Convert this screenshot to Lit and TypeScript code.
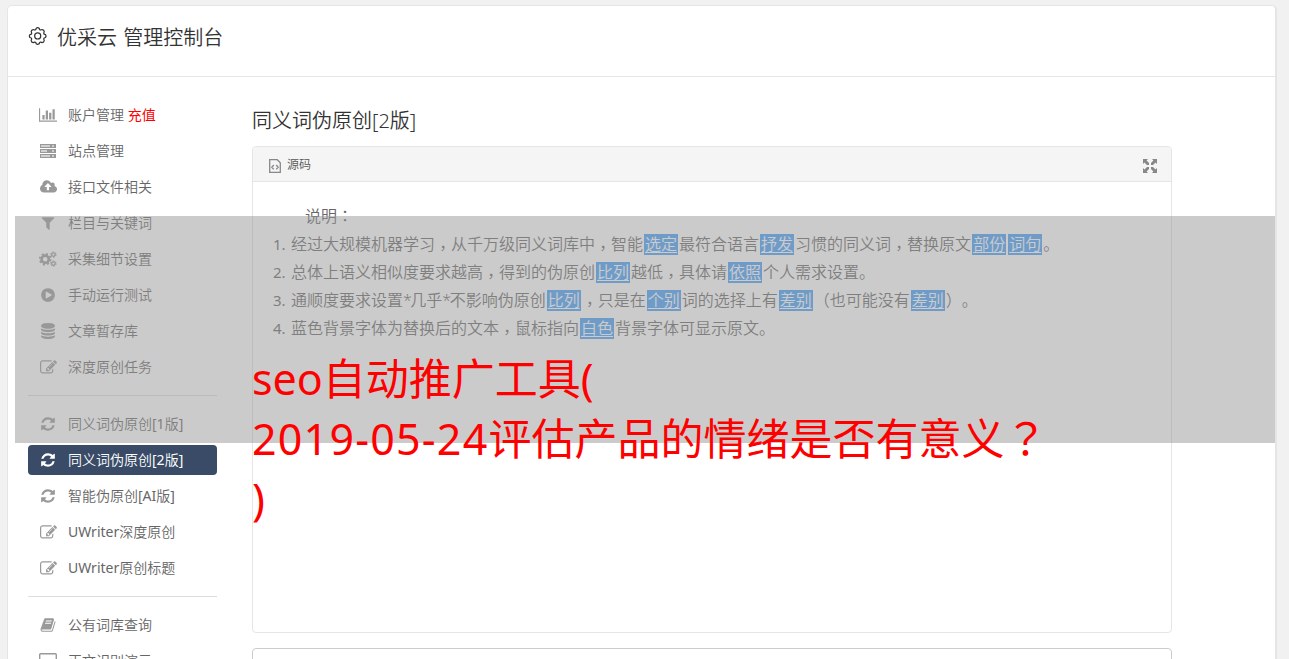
import { LitElement, css, html, svg } from 'lit'
import { customElement, property } from 'lit/decorators.js'

const icons: Record<string, { box: string; width: number; shape: unknown }> = {
  chart: {
    box: '0 0 2048 1792',
    width: 18,
    shape: svg`<path d="M640 896v512h-256v-512h256zm384-512v1024h-256v-1024h256zm1024 1152v128h-2048v-1536h128v1408h1920zm-640-896v768h-256v-768h256zm384-384v1152h-256v-1152h256z"/>`,
  },
  server: {
    box: '0 0 16 16',
    width: 16,
    shape: svg`<path fill-rule="evenodd" d="M0 1h16v4H0zM1 2v2h9V2zM12 2.5v1h2v-1zM0 6h16v4H0zM1 7v2h6V7zM12 7.5v1h2v-1zM0 11h16v4H0zM1 12v2h9v-2zM12 12.5v1h2v-1z"/><path opacity=".45" d="M1 2h9v2H1zM1 7h6v2H1zM1 12h9v2H1z"/>`,
  },
  cloud: {
    box: '0 0 1920 1792',
    width: 17,
    shape: svg`<path d="M1280 864q0-14-9-23l-352-352q-9-9-23-9t-23 9l-351 351q-10 12-10 24 0 14 9 23t23 9h224v352q0 13 9.5 22.5t22.5 9.5h192q13 0 22.5-9.5t9.5-22.5v-352h224q13 0 22.5-9.5t9.5-22.5zm640 288q0 159-112.5 271.5t-271.5 112.5h-1088q-185 0-316.5-131.5t-131.5-316.5q0-130 70-240t188-165q-2-30-2-43 0-212 150-362t362-150q156 0 285.5 87t188.5 231q71-62 166-62 106 0 181 75t75 181q0 76-41 138 130 31 213.5 135.5t83.5 238.5z"/>`,
  },
  filter: {
    box: '0 0 1792 1792',
    width: 16,
    shape: svg`<path d="M1595 295q17 41-14 70l-493 493v742q0 42-39 59-13 5-25 5-27 0-45-19l-256-256q-19-19-19-45v-486l-493-493q-31-29-14-70 17-39 59-39h1280q42 0 59 39z"/>`,
  },
  cogs: {
    box: '0 0 18 16',
    width: 18,
    shape: svg`<g fill="none" stroke="currentColor">
      <circle cx="6.2" cy="8.2" r="3.6" stroke-width="2.6"/>
      <circle cx="6.2" cy="8.2" r="5.4" stroke-width="1.7" stroke-dasharray="2.12 2.12"/>
      <circle cx="14.4" cy="3.6" r="1.8" stroke-width="1.3"/>
      <circle cx="14.4" cy="3.6" r="2.7" stroke-width="1" stroke-dasharray="1.4 1.43"/>
      <circle cx="14.4" cy="12.6" r="1.8" stroke-width="1.3"/>
      <circle cx="14.4" cy="12.6" r="2.7" stroke-width="1" stroke-dasharray="1.4 1.43"/>
    </g>`,
  },
  play: {
    box: '0 0 1792 1792',
    width: 16,
    shape: svg`<path d="M896 128q209 0 385.500 103t279.500 279.500 103 385.500-103 385.500-279.500 279.500-385.500 103-385.500-103-279.500-279.500-103-385.500 103-385.500 279.500-279.500 385.500-103zm384 823q32-18 32-55t-32-55l-544-320q-31-19-64-1-32 19-32 56v640q0 37 32 56 16 8 32 8 17 0 32-9z"/>`,
  },
  database: {
    box: '0 0 1792 1792',
    width: 16,
    shape: svg`<path d="M896 768q237 0 443-43t325-127v170q0 69-103 128t-280 93.500-385 34.500-385-34.500-280-93.500-103-128v-170q119 84 325 127t443 43zm0 768q237 0 443-43t325-127v170q0 69-103 128t-280 93.500-385 34.500-385-34.500-280-93.500-103-128v-170q119 84 325 127t443 43zm0-384q237 0 443-43t325-127v170q0 69-103 128t-280 93.500-385 34.500-385-34.500-280-93.500-103-128v-170q119 84 325 127t443 43zm0-1152q208 0 385 34.500t280 93.500 103 128v128q0 69-103 128t-280 93.500-385 34.500-385-34.500-280-93.500-103-128v-128q0-69 103-128t280-93.500 385-34.500z"/>`,
  },
  edit: {
    box: '0 0 1792 1792',
    width: 17,
    shape: svg`<path d="M888 1184l116-116-152-152-116 116v56h96v96h56zm440-720q-16-16-33 1l-350 350q-17 17-1 33t33-1l350-350q17-17 1-33zm80 594v190q0 119-84.500 203.500t-203.500 84.500h-832q-119 0-203.500-84.500t-84.500-203.500v-832q0-119 84.500-203.500t203.500-84.500h832q63 0 117 25 15 7 18 23 3 17-9 29l-49 49q-14 14-32 8-23-6-45-6h-832q-66 0-113 47t-47 113v832q0 66 47 113t113 47h832q66 0 113-47t47-113v-126q0-13 9-22l64-64q15-15 35-7t20 29zm-96-738l288 288-672 672h-288v-288zm444 132l-92 92-288-288 92-92q28-28 68-28t68 28l152 152q28 28 28 68t-28 68z"/>`,
  },
  refresh: {
    box: '0 0 1792 1792',
    width: 16,
    shape: svg`<path d="M1639 1056q0 5-1 7-64 268-268 434.500t-478 166.500q-146 0-282.500-55t-243.500-157l-129 129q-19 19-45 19t-45-19-19-45v-448q0-26 19-45t45-19h448q26 0 45 19t19 45-19 45l-137 137q71 66 161 102t187 36q134 0 250-65t186-179q11-17 53-117 8-23 30-23h192q13 0 22.500 9.500t9.500 22.500zm25-800v448q0 26-19 45t-45 19h-448q-26 0-45-19t-19-45 19-45l138-138q-148-137-349-137-134 0-250 65t-186 179q-11 17-53 117-8 23-30 23h-199q-13 0-22.500-9.500t-9.500-22.500v-7q65-268 270-434.500t480-166.500q146 0 284 55.500t245 156.500l130-129q19-19 45-19t45 19 19 45z"/>`,
  },
  book: {
    box: '0 0 1792 1792',
    width: 16,
    shape: svg`<path d="M1703 478q40 57 18 129l-275 906q-19 64-76.500 107.500t-122.500 43.500h-923q-77 0-148.500-53.500t-99.500-131.500q-24-67-2-127 0-4 3-27t4-37q1-8-3-21.500t-3-19.500q2-11 8-21t16.500-23.500 16.500-23.500q23-38 45-91.500t30-91.500q3-10 .5-30t-.5-28q3-11 17-28t17-23q21-36 42-92t25-90q1-9-2.500-32t.5-28q4-13 22-30.500t22-22.500q19-26 42.500-84.500t27.500-96.500q1-8-3-25.500t-2-26.500q2-8 9-18t18-23 17-21q8-12 16.500-30.500t15-35 16-36 19.500-32 26.500-23.500 36-11.500 47.500 5.500l-1 3q38-9 51-9h761q74 0 114 56t18 130l-274 906q-36 119-71.500 153.500t-128.500 34.500h-869q-27 0-38 15-11 16-1 43 24 70 144 70h923q29 0 56-15.500t35-41.500l300-987q7-22 5-57 38 15 59 43zm-1064 2q-4 13 2 22.500t20 9.500h608q13 0 25.500-9.500t16.500-22.500l21-64q4-13-2-22.500t-20-9.500h-608q-13 0-25.500 9.500t-16.500 22.500zm-83 256q-4 13 2 22.500t20 9.500h608q13 0 25.500-9.500t16.500-22.500l21-64q4-13-2-22.500t-20-9.500h-608q-13 0-25.500 9.500t-16.500 22.500z"/>`,
  },
  screen: {
    box: '0 0 18 16',
    width: 18,
    shape: svg`<rect x=".7" y=".7" width="16.600" height="12" rx="1" fill="none" stroke="currentColor" stroke-width="1.400"/>`,
  },
  gear: {
    box: '0 0 20 20',
    width: 20,
    shape: svg`<g fill="none" stroke="currentColor" stroke-width="1.400" stroke-linejoin="round" transform="translate(1 0) scale(.87)">
      <path d="M8.300 1.500Q10 .2 11.700 1.500l.5 1.500 1.100.5 1.800-.6q2.300.2 2.400 2.400l-.6 1.800.5 1.100 1.500.5q1.300 1.700 0 3.400l-1.500.5-.5 1.100.6 1.800q-.2 2.300-2.400 2.400l-1.800-.6-1.100.5-.5 1.500q-1.700 1.300-3.400 0l-.5-1.500-1.100-.5-1.800.6q-2.300-.2-2.400-2.400l.6-1.800-.5-1.100-1.500-.5q-1.300-1.700 0-3.400l1.500-.5.5-1.100-.6-1.800q.2-2.300 2.400-2.400l1.800.6 1.100-.5z"/>
      <circle cx="10" cy="10.300" r="3.500"/>
    </g>`,
  },
  source: {
    box: '0 0 12 14',
    width: 12,
    shape: svg`<path d="M.7.7h7.600l3 3v9.600H.7zM4.800 6 2.800 8.200l2 2.200M7.200 6l2 2.200-2 2.200" fill="none" stroke="currentColor" stroke-width="1.300"/>`,
  },
  expand: {
    box: '0 0 14 14',
    width: 14,
    shape: svg`<path d="M0 0h5L3.600 1.500 6 4v2H4L1.500 3.600 0 5zM14 0v5l-1.500-1.400L10 6H8V4l2.400-2.500L9 0zM0 14V9l1.500 1.400L4 8h2v2l-2.400 2.500L5 14zM14 14H9l1.400-1.500L8 10V8h2l2.500 2.400L14 9z"/>`,
  },
}

@customElement('ui-icon')
export class UiIcon extends LitElement {
  @property() name = 'edit'

  render() {
    const icon = icons[this.name]
    return html`<svg viewBox=${icon.box} width=${icon.width} fill="currentColor">${icon.shape}</svg>`
  }

  static styles = css`
    :host {
      display: inline-flex;
      align-items: center;
      justify-content: center;
    }

    svg {
      display: block;
      flex: none;
    }
  `
}

const menu = [
  [
    { icon: 'chart', label: '账户管理', extra: '充值' },
    { icon: 'server', label: '站点管理' },
    { icon: 'cloud', label: '接口文件相关' },
    { icon: 'filter', label: '栏目与关键词' },
    { icon: 'cogs', label: '采集细节设置' },
    { icon: 'play', label: '手动运行测试' },
    { icon: 'database', label: '文章暂存库' },
    { icon: 'edit', label: '深度原创任务' },
  ],
  [
    { icon: 'refresh', label: '同义词伪原创[1版]' },
    { icon: 'refresh', label: '同义词伪原创[2版]', active: true },
    { icon: 'refresh', label: '智能伪原创[AI版]' },
    { icon: 'edit', label: 'UWriter深度原创' },
    { icon: 'edit', label: 'UWriter原创标题' },
  ],
  [
    { icon: 'book', label: '公有词库查询' },
    { icon: 'screen', label: '正文识别演示' },
  ],
]

// words between bars are the replaced ones
const notes = [
  '经过大规模机器学习，从千万级同义词库中，智能|选定|最符合语言|抒发|习惯的同义词，替换原文|部份||词句|。',
  '总体上语义相似度要求越高，得到的伪原创|比列|越低，具体请|依照|个人需求设置。',
  '通顺度要求设置*几乎*不影响伪原创|比列|，只是在|个别|词的选择上有|差别|（也可能没有|差别|）。',
  '蓝色背景字体为替换后的文本，鼠标指向|白色|背景字体可显示原文。',
]

// full-width marks sit in the middle of their cell, latin runs are a bit heavier
const mixed = (text: string) =>
  text.split(/([，：？（）*]|[\w[\]]+)/).map((part) => {
    if (part === '*') return html`<span class="star">*</span>`
    if (part === '，') return html`<span class="mark comma" lang="zh-TW">，</span>`
    if (/^[：？（）]$/.test(part)) return html`<span class="mark" lang="zh-TW">${part}</span>`
    return /^[\w[\]]+$/.test(part) ? html`<span class="latin">${part}</span>` : part
  })

@customElement('app-root')
export class AppRoot extends LitElement {
  renderItem(item: any) {
    return html`<a class="item ${item.active ? 'active' : ''}">
      <ui-icon class="item-icon" name=${item.icon}></ui-icon>
      <span>${mixed(item.label)}${item.extra ? html` <b class="extra">${item.extra}</b>` : ''}</span>
    </a>`
  }

  renderNote(note: string) {
    return note.split('|').map((part, i) => (i % 2 ? html`<u class="word">${part}</u>` : mixed(part)))
  }

  render() {
    return html`
      <div class="card">
        <header class="header">
          <ui-icon name="gear"></ui-icon>
          <span>优采云 管理控制台</span>
        </header>
        <div class="body">
          <nav class="menu">
            ${menu.map((group) => html`<div class="group">${group.map((item) => this.renderItem(item))}</div>`)}
          </nav>
          <main class="main">
            <h1 class="title">同义词伪原创[2版]</h1>
            <section class="editor">
              <div class="toolbar">
                <ui-icon name="source"></ui-icon>
                <span class="source">源码</span>
                <ui-icon name="expand"></ui-icon>
              </div>
              <div class="content">
                <div class="intro">${mixed('说明：')}</div>
                ${notes.map(
                  (note, i) => html`<div class="note"><span class="number">${i + 1}.</span><span>${this.renderNote(note)}</span></div>`
                )}
              </div>
            </section>
            <section class="next"></section>
          </main>
        </div>
      </div>
      <div class="shade"></div>
      <div class="caption">
        <div>seo自动推广工具(</div>
        <div><span class="date">2019-05-24</span>${mixed('评估产品的情绪是否有意义？')}</div>
        <div>)</div>
      </div>
    `
  }

  static styles = css`
    :host {
      display: block;
      position: relative;
      box-sizing: border-box;
      width: 1289px;
      height: 659px;
      padding: 5px 12px 0 7px;
      overflow: hidden;
      background: #f1f1f1;
      color: #666;
      font: 350 14px 'Noto Sans', 'Noto Sans CJK SC', sans-serif;
    }

    .card {
      box-sizing: border-box;
      height: 700px;
      background: #fff;
      border: 1px solid #e5e5e5;
      border-right-width: 2px;
      border-radius: 5px;
    }

    .header {
      display: flex;
      align-items: center;
      gap: 9px;
      box-sizing: border-box;
      height: 71px;
      padding: 0 20px 9px;
      border-bottom: 1px solid #e5e5e5;
      color: #333;
      font-size: 20px;
      word-spacing: 1px;
    }

    .body {
      display: flex;
      gap: 35px;
      padding: 23px 20px 0;
    }

    .menu {
      flex: none;
      width: 189px;
    }

    .group {
      display: flex;
      flex-direction: column;
      gap: 6px;
    }

    .group + .group {
      margin-top: 13px;
      padding-top: 13px;
      border-top: 1px solid #ddd;
    }

    .item {
      display: flex;
      align-items: center;
      gap: 10px;
      height: 30px;
      padding-left: 10px;
      border-radius: 4px;
      line-height: 30px;
      white-space: nowrap;
    }

    .item-icon {
      width: 20px;
      color: #999;
    }

    .extra {
      color: #f00;
      font-weight: 400;
    }

    .active,
    .active .item-icon {
      color: #fff;
    }

    .active {
      background: #394b66;
    }

    .main {
      width: 920px;
    }

    .title {
      margin: 0;
      padding: 6px 0 10px;
      color: #333;
      font-size: 20px;
      font-weight: 350;
      line-height: 30px;
    }

    .editor {
      box-sizing: border-box;
      height: 487px;
      border: 1px solid #e5e5e5;
      border-radius: 4px;
      overflow: hidden;
    }

    .toolbar {
      display: flex;
      align-items: center;
      gap: 6px;
      height: 34px;
      padding: 0 14px 0 16px;
      background: #f5f5f5;
      border-bottom: 1px solid #e5e5e5;
      color: #888;
    }

    .toolbar ui-icon {
      padding-top: 4px;
    }

    .source {
      flex: 1;
      color: #555;
      font-size: 12px;
    }

    .content {
      padding: 20px;
      font-size: 16px;
      line-height: 28px;
      white-space: nowrap;
    }

    .intro {
      padding-left: 32px;
    }

    .note {
      display: flex;
    }

    .number {
      width: 18px;
      font-size: 15px;
      font-weight: 400;
    }

    .latin {
      font-weight: 400;
    }

    .mark {
      display: inline-block;
      width: 1em;
      font-family: 'Noto Sans CJK TC', sans-serif;
      line-height: 1;
    }

    .comma {
      vertical-align: -4px;
    }

    .star {
      letter-spacing: -1.5px;
    }

    .word {
      margin: 0 1px;
      padding: 0 1px;
      background: #479ff9;
      color: #fff;
      line-height: 21px;
      display: inline-block;
      text-underline-offset: 2px;
    }

    .next {
      height: 100px;
      margin-top: 15px;
      border: 1px solid #ccc;
      border-radius: 4px;
    }

    .shade {
      position: absolute;
      left: 15px;
      top: 216px;
      width: 1260px;
      height: 227px;
      background: rgba(151, 151, 151, 0.5);
    }

    .caption {
      position: absolute;
      left: 252px;
      top: 349px;
      color: #f00;
      font-size: 43px;
      font-weight: 400;
      line-height: 60px;
      white-space: nowrap;
    }

    .date {
      letter-spacing: 1.2px;
    }
  `
}
